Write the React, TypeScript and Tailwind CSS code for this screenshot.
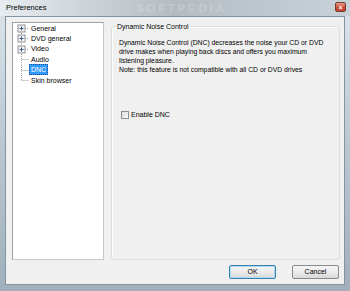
import React from 'react';

const font = { fontFamily: '"Liberation Sans", Arial, sans-serif' };

const TreeRow: React.FC<{ label: string; expandable?: boolean; selected?: boolean; first?: boolean; last?: boolean }> = ({ label, expandable, selected, first, last }) => (
  <div className="flex items-center h-[10.4px]">
    <svg width="17" height="10.4" viewBox="0 0 17 10.4" className="shrink-0">
      {/* vertical connector */}
      <line
        x1="8.5"
        y1={first ? 5.2 : 0}
        x2="8.5"
        y2={last ? 5.2 : 10.4}
        stroke="#a0a0a0"
        strokeWidth="1"
        strokeDasharray="1 1"
      />
      <line x1={expandable ? 12 : 8.5} y1="5.5" x2="16" y2="5.5" stroke="#a0a0a0" strokeWidth="1" strokeDasharray="1 1" />
      {expandable && (
        <>
          <rect x="5" y="2" width="7" height="7" fill="#f4f4f4" stroke="#929292" strokeWidth="1" />
          <line x1="6.5" y1="5.5" x2="10.5" y2="5.5" stroke="#3a5a8a" strokeWidth="1" />
          <line x1="8.5" y1="3.5" x2="8.5" y2="7.5" stroke="#3a5a8a" strokeWidth="1" />
        </>
      )}
    </svg>
    <span
      className={`text-[7px] leading-[9px] px-[1px] whitespace-nowrap ${
        selected ? 'bg-[#3399ff] text-white border border-dotted border-[#1a4f8a] -ml-[1px]' : 'text-black'
      }`}
    >
      {label}
    </span>
  </div>
);

const Button: React.FC<{ label: string; focused?: boolean }> = ({ label, focused }) => (
  <div
    className={`w-[47px] h-[14px] rounded-[2px] flex items-center justify-center text-[7px] text-black bg-gradient-to-b from-[#f4f4f4] via-[#ebebeb] to-[#d9d9d9] border ${
      focused ? 'border-[#3c7fb1] shadow-[inset_0_0_0_1px_#a9dcf5]' : 'border-[#8a8a8a]'
    }`}
  >
    {label}
  </div>
);

export default function App() {
  return (
    <div className="w-[350px] h-[291px] bg-gradient-to-b from-[#dde5eb] via-[#b9c7d1] to-[#9fb0bc] flex flex-col" style={font}>
      {/* title bar */}
      <div className="h-[16px] flex items-center pl-[6px] pr-[4px] bg-gradient-to-r from-[#e6ecf0] via-[#b4bcc2] to-[#c8d2d9]">
        <span className="text-[7.5px] text-black">Preferences</span>
        <span className="ml-[90px] text-[11px] font-bold tracking-[3px] text-white/20">SOFTPEDIA</span>
        <div className="ml-auto mb-[2px] w-[11px] h-[10px] rounded-[2px] border border-[#7a3a30] bg-gradient-to-b from-[#e8a08c] via-[#d0503c] to-[#c04030] flex items-center justify-center">
          <span className="text-[7px] leading-none font-bold text-white">×</span>
        </div>
      </div>

      {/* client area */}
      <div className="ml-[5px] w-[340px] h-[269px] bg-[#f0f0f0] border border-[#8494a0] flex flex-col">
        <div className="flex pt-[5px] pl-[6px] gap-[7px]">
          {/* tree */}
          <div className="w-[92px] h-[238px] bg-white border border-[#a0a0a0] border-b-[#c8c8c8] border-r-[#c8c8c8]">
            <TreeRow label="General" expandable first />
            <TreeRow label="DVD general" expandable />
            <TreeRow label="Video" expandable />
            <TreeRow label="Audio" />
            <TreeRow label="DNC" selected />
            <TreeRow label="Skin browser" last />
          </div>

          {/* group box */}
          <fieldset className="w-[229px] h-[238px] border border-[#d5dfe5] rounded-[3px] px-[7px] shadow-[inset_1px_1px_0_#ffffff]">
            <legend className="text-[7px] text-black px-[1px] ml-[-3px] leading-[9px]">Dynamic Noise Control</legend>
            <div className="text-[6.8px] leading-[9px] text-black mt-[7px] whitespace-nowrap">
              Dynamic Noise Control (DNC) decreases the noise your CD or DVD
              <br />
              drive makes when playing back discs and offers you maximum
              <br />
              listening pleasure.
              <br />
              Note: this feature is not compatible with all CD or DVD drives
            </div>
            <label className="flex items-center gap-[2px] mt-[36px] ml-[2px]">
              <span className="w-[8px] h-[8px] border border-[#8e8f8f] bg-gradient-to-br from-[#dcdcdc] to-[#fbfbfb]" />
              <span className="text-[7px] text-black leading-[9px]">Enable DNC</span>
            </label>
          </fieldset>
        </div>

        <div className="flex justify-end gap-[16px] pr-[5px] mt-[5px]">
          <Button label="OK" focused />
          <Button label="Cancel" />
        </div>
      </div>
    </div>
  );
}
